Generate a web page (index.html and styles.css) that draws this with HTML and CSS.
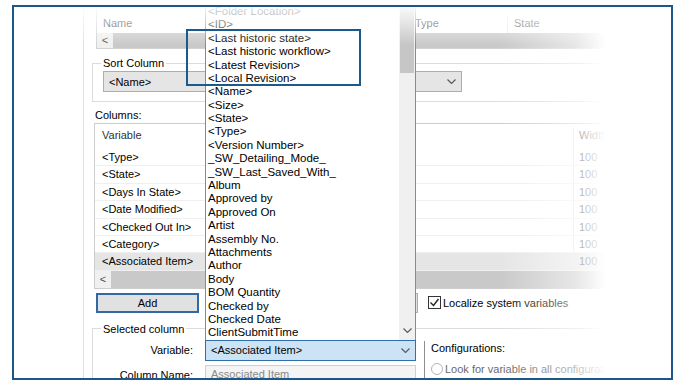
FILE: index.html
```html
<!DOCTYPE html>
<html lang="en">
<head>
    <meta charset="UTF-8">
    <title>Column set dialog</title>
    <link rel="stylesheet" href="styles.css">
</head>
<body>
    <div class="frame">
        <div class="dialog">
            <!-- file list (scrolled, only the bottom is in view) -->
            <div class="listbox top-list">
                <div class="list-head">
                    <span class="cell cell-name">Name</span>
                    <span class="cell cell-type">Type</span>
                    <span class="cell cell-state">State</span>
                </div>
                <div class="hscroll">
                    <span class="arrow">&lt;</span>
                    <span class="thumb"></span>
                </div>
            </div>

            <fieldset class="group sort-group">
                <legend>Sort Column</legend>
                <div class="combo sort-combo">
                    <span>&lt;Name&gt;</span>
                    <svg class="chev" width="9" height="5" viewBox="0 0 9 5"><polyline points="0.5,0.5 4.5,4.5 8.5,0.5"/></svg>
                </div>
            </fieldset>

            <div class="label">Columns:</div>
            <div class="listbox columns-list">
                <div class="col-head">
                    <span class="cell cell-var">Variable</span>
                    <span class="cell cell-width">Width</span>
                </div>
                <div class="row"><span class="cell cell-var">&lt;Type&gt;</span><span class="cell cell-width">100</span></div>
                <div class="row"><span class="cell cell-var">&lt;State&gt;</span><span class="cell cell-width">100</span></div>
                <div class="row"><span class="cell cell-var">&lt;Days In State&gt;</span><span class="cell cell-width">100</span></div>
                <div class="row"><span class="cell cell-var">&lt;Date Modified&gt;</span><span class="cell cell-width">100</span></div>
                <div class="row"><span class="cell cell-var">&lt;Checked Out In&gt;</span><span class="cell cell-width">100</span></div>
                <div class="row"><span class="cell cell-var">&lt;Category&gt;</span><span class="cell cell-width">100</span></div>
                <div class="row selected"><span class="cell cell-var">&lt;Associated Item&gt;</span><span class="cell cell-width">100</span></div>
                <div class="hscroll tall">
                    <span class="arrow">&lt;</span>
                    <span class="thumb"></span>
                </div>
            </div>

            <div class="add-row">
                <button class="btn btn-focus">Add</button>
                <button class="btn btn-hidden">Remove</button>
                <label class="check">
                    <span class="check-box">
                        <svg width="11" height="11" viewBox="0 0 11 11"><polyline points="1.5,5.5 4.5,8.5 9.5,2"/></svg>
                    </span>
                    Localize system variables
                </label>
            </div>

            <fieldset class="group selected-group">
                <legend>Selected column</legend>
                <div class="sel-body">
                    <div class="sel-fields">
                        <div class="field">
                            <span class="field-label">Variable:</span>
                            <div class="combo-wrap">
                                <div class="dropdown">
                                    <ul class="options">
                                        <li>&lt;Folder Location&gt;</li>
                                        <li>&lt;ID&gt;</li>
                                        <li>&lt;Last historic state&gt;</li>
                                        <li>&lt;Last historic workflow&gt;</li>
                                        <li>&lt;Latest Revision&gt;</li>
                                        <li>&lt;Local Revision&gt;</li>
                                        <li>&lt;Name&gt;</li>
                                        <li>&lt;Size&gt;</li>
                                        <li>&lt;State&gt;</li>
                                        <li>&lt;Type&gt;</li>
                                        <li>&lt;Version Number&gt;</li>
                                        <li>_SW_Detailing_Mode_</li>
                                        <li>_SW_Last_Saved_With_</li>
                                        <li>Album</li>
                                        <li>Approved by</li>
                                        <li>Approved On</li>
                                        <li>Artist</li>
                                        <li>Assembly No.</li>
                                        <li>Attachments</li>
                                        <li>Author</li>
                                        <li>Body</li>
                                        <li>BOM Quantity</li>
                                        <li>Checked by</li>
                                        <li>Checked Date</li>
                                        <li>ClientSubmitTime</li>
                                    </ul>
                                    <div class="vscroll">
                                        <span class="vthumb"></span>
                                        <span class="vtrack"></span>
                                        <span class="varrow">
                                            <svg class="chev" width="9" height="5" viewBox="0 0 9 5"><polyline points="0.5,0.5 4.5,4.5 8.5,0.5"/></svg>
                                        </span>
                                    </div>
                                </div>
                                <div class="combo combo-active">
                                    <span>&lt;Associated Item&gt;</span>
                                    <svg class="chev" width="9" height="5" viewBox="0 0 9 5"><polyline points="0.5,0.5 4.5,4.5 8.5,0.5"/></svg>
                                </div>
                            </div>
                        </div>
                        <div class="field">
                            <span class="field-label">Column Name:</span>
                            <div class="textbox">Associated Item</div>
                        </div>
                    </div>
                    <div class="config">
                        <div class="config-title">Configurations:</div>
                        <label class="radio"><span class="radio-dot"></span>Look for variable in all configurations</label>
                    </div>
                </div>
            </fieldset>
        </div>

        <div class="fade-right"></div>
        <div class="fade-top"></div>
        <div class="callout"></div>
    </div>
</body>
</html>
```

FILE: styles.css
```css
* {
    box-sizing: border-box;
}
body {
    margin: 0;
    background-color: #fff;
    font-family: 'Liberation Sans', Arial, sans-serif;
    font-size: 11px;
    color: #000;
}
.frame {
    position: relative;
    margin: 5px 0 0 12px;
    width: 661px;
    height: 375px;
    border: 2px solid #1c5789;
    overflow: hidden;
    background-color: #fff;
}
.dialog {
    margin-left: 69px;
    width: 560px;
    height: 100%;
    border-left: 1px solid #e0e0e0;
    padding-left: 10px;
}

/* list boxes */
.listbox {
    border: 1px solid #d2d2d2;
    background-color: #fff;
}
.cell {
    display: block;
    white-space: nowrap;
    overflow: hidden;
}
.top-list {
    margin-left: 2px;
    width: 514px;
    border-top: 0;
}
.list-head {
    display: flex;
    height: 26px;
    padding-top: 9px;
    line-height: 14px;
    color: #333;
}
.cell-name { width: 312px; padding-left: 6px; }
.cell-type { width: 98px; padding-left: 6px; }
.cell-state { flex: 1; padding-left: 6px; border-left: 1px solid #e5e5e5; }
.hscroll {
    display: flex;
    height: 15px;
    background-color: #f0f0f0;
}
.hscroll.tall { height: 17px; }
.hscroll .arrow {
    width: 16px;
    text-align: center;
    line-height: 15px;
    font-size: 11px;
    color: #505050;
}
.hscroll.tall .arrow { line-height: 17px; }
.hscroll .thumb {
    flex: 1;
    background-color: #c9c9c9;
}

/* group boxes */
.group {
    margin: 7px 0 0 -2px;
    width: 522px;
    padding: 0 10px 9px;
    border: 1px solid #dcdcdc;
}
.group legend {
    margin-left: -2px;
    padding: 0 2px;
    line-height: 14px;
}
.combo {
    display: flex;
    align-items: center;
    justify-content: space-between;
    height: 21px;
    padding: 0 5px 0 5px;
    border: 1px solid #adadad;
    background-color: #e5e5e5;
}
.sort-combo {
    margin-top: 1px;
    width: 359px;
}
.chev {
    fill: none;
    stroke: #5c5c5c;
    stroke-width: 1.2;
}

.label {
    margin-top: 6px;
    padding-left: 1px;
    line-height: 14px;
}
.columns-list {
    margin-top: 1px;
    width: 516px;
    border-color: #cdcdcd;
}
.col-head {
    display: flex;
    height: 25px;
    padding-top: 4px;
    line-height: 14px;
    color: #333;
}
.row {
    display: flex;
    height: 17.4px;
    line-height: 17px;
    border-bottom: 1px solid #efefef;
}
.row.selected { background-color: #e5e5e5; }
.cell-var { width: 478px; padding-left: 7px; }
.cell-width { flex: 1; padding-left: 5px; border-left: 1px solid #e5e5e5; color: #333; }

/* button row */
.add-row {
    display: flex;
    align-items: center;
    margin-top: 4px;
    height: 20px;
}
.btn {
    height: 20px;
    margin: 0;
    padding: 0;
    font-family: inherit;
    font-size: 11px;
    color: #000;
    background-color: #e1e1e1;
    border: 1px solid #adadad;
}
.btn-focus {
    margin-left: 2px;
    width: 103px;
    border: 2px solid #2f6aa6;
}
.btn-hidden {
    margin-left: 101px;
    width: 118px;
    color: transparent;
}
.check {
    display: flex;
    align-items: center;
    margin-left: 10px;
    gap: 2px;
}
.check-box {
    display: flex;
    width: 13px;
    height: 13px;
    border: 1px solid #333;
    background-color: #fff;
}
.check-box polyline {
    fill: none;
    stroke: #222;
    stroke-width: 1.4;
}

/* selected column */
.selected-group {
    margin-top: 9px;
    padding-bottom: 20px;
}
.sel-body { display: flex; }
.sel-fields { width: 313px; }
.field {
    display: flex;
    align-items: center;
    margin-top: 4px;
}
.field-label {
    width: 90px;
    margin-right: 12px;
    text-align: right;
}
.combo-wrap {
    position: relative;
    width: 211px;
}
.combo-active {
    background-color: #cce2f5;
    border-color: #3270ad;
}
.textbox {
    width: 211px;
    height: 21px;
    padding-left: 5px;
    line-height: 17px;
    color: #8a8a8a;
    background-color: #f4f4f4;
    border: 1px solid #d0d0d0;
}

/* open drop-down list */
.dropdown {
    position: absolute;
    left: 0;
    right: 0;
    bottom: 100%;
    display: flex;
    background-color: #fff;
    border-left: 1px solid #5f93c9;
    border-right: 1px solid #5f93c9;
    z-index: 2;
}
.options {
    flex: 1;
    margin: 0;
    padding: 0;
    list-style: none;
    font-size: 11.5px;
    color: #000;
}
.options li {
    height: 13.4px;
    line-height: 13.4px;
    padding-left: 2px;
    white-space: nowrap;
}
.vscroll {
    display: flex;
    flex-direction: column;
    width: 16px;
    background-color: #f0f0f0;
}
.vthumb {
    height: 68px;
    margin: 0 1px;
    background-color: #c6c6c6;
}
.vtrack { flex: 1; }
.varrow {
    display: flex;
    align-items: center;
    justify-content: center;
    height: 18px;
}

.config {
    margin: 5px 0 0 8px;
    padding-left: 6px;
    border-left: 1px solid #8e8e8e;
}
.config-title { line-height: 14px; }
.radio {
    display: flex;
    align-items: center;
    gap: 2px;
    margin-top: 8px;
    color: #6a6a6a;
    white-space: nowrap;
}
.radio-dot {
    width: 12px;
    height: 12px;
    border: 1px solid #b4b4b4;
    border-radius: 50%;
}

/* screenshot treatment */
.fade-right {
    position: absolute;
    top: 0;
    right: 0;
    bottom: 0;
    left: 0;
    background: linear-gradient(to right, rgba(255,255,255,0) 486px, rgba(255,255,255,0.55) 561px, #fff 592px);
    z-index: 3;
}
.fade-top {
    position: absolute;
    top: 0;
    right: 0;
    left: 0;
    height: 40px;
    background: linear-gradient(to bottom, rgba(255,255,255,0.9) 0, rgba(255,255,255,0.55) 16px, rgba(255,255,255,0) 38px);
    z-index: 3;
}
.callout {
    position: absolute;
    left: 172px;
    top: 22px;
    width: 175px;
    height: 57px;
    border: 2px solid #1d5a8c;
    z-index: 4;
}
```
